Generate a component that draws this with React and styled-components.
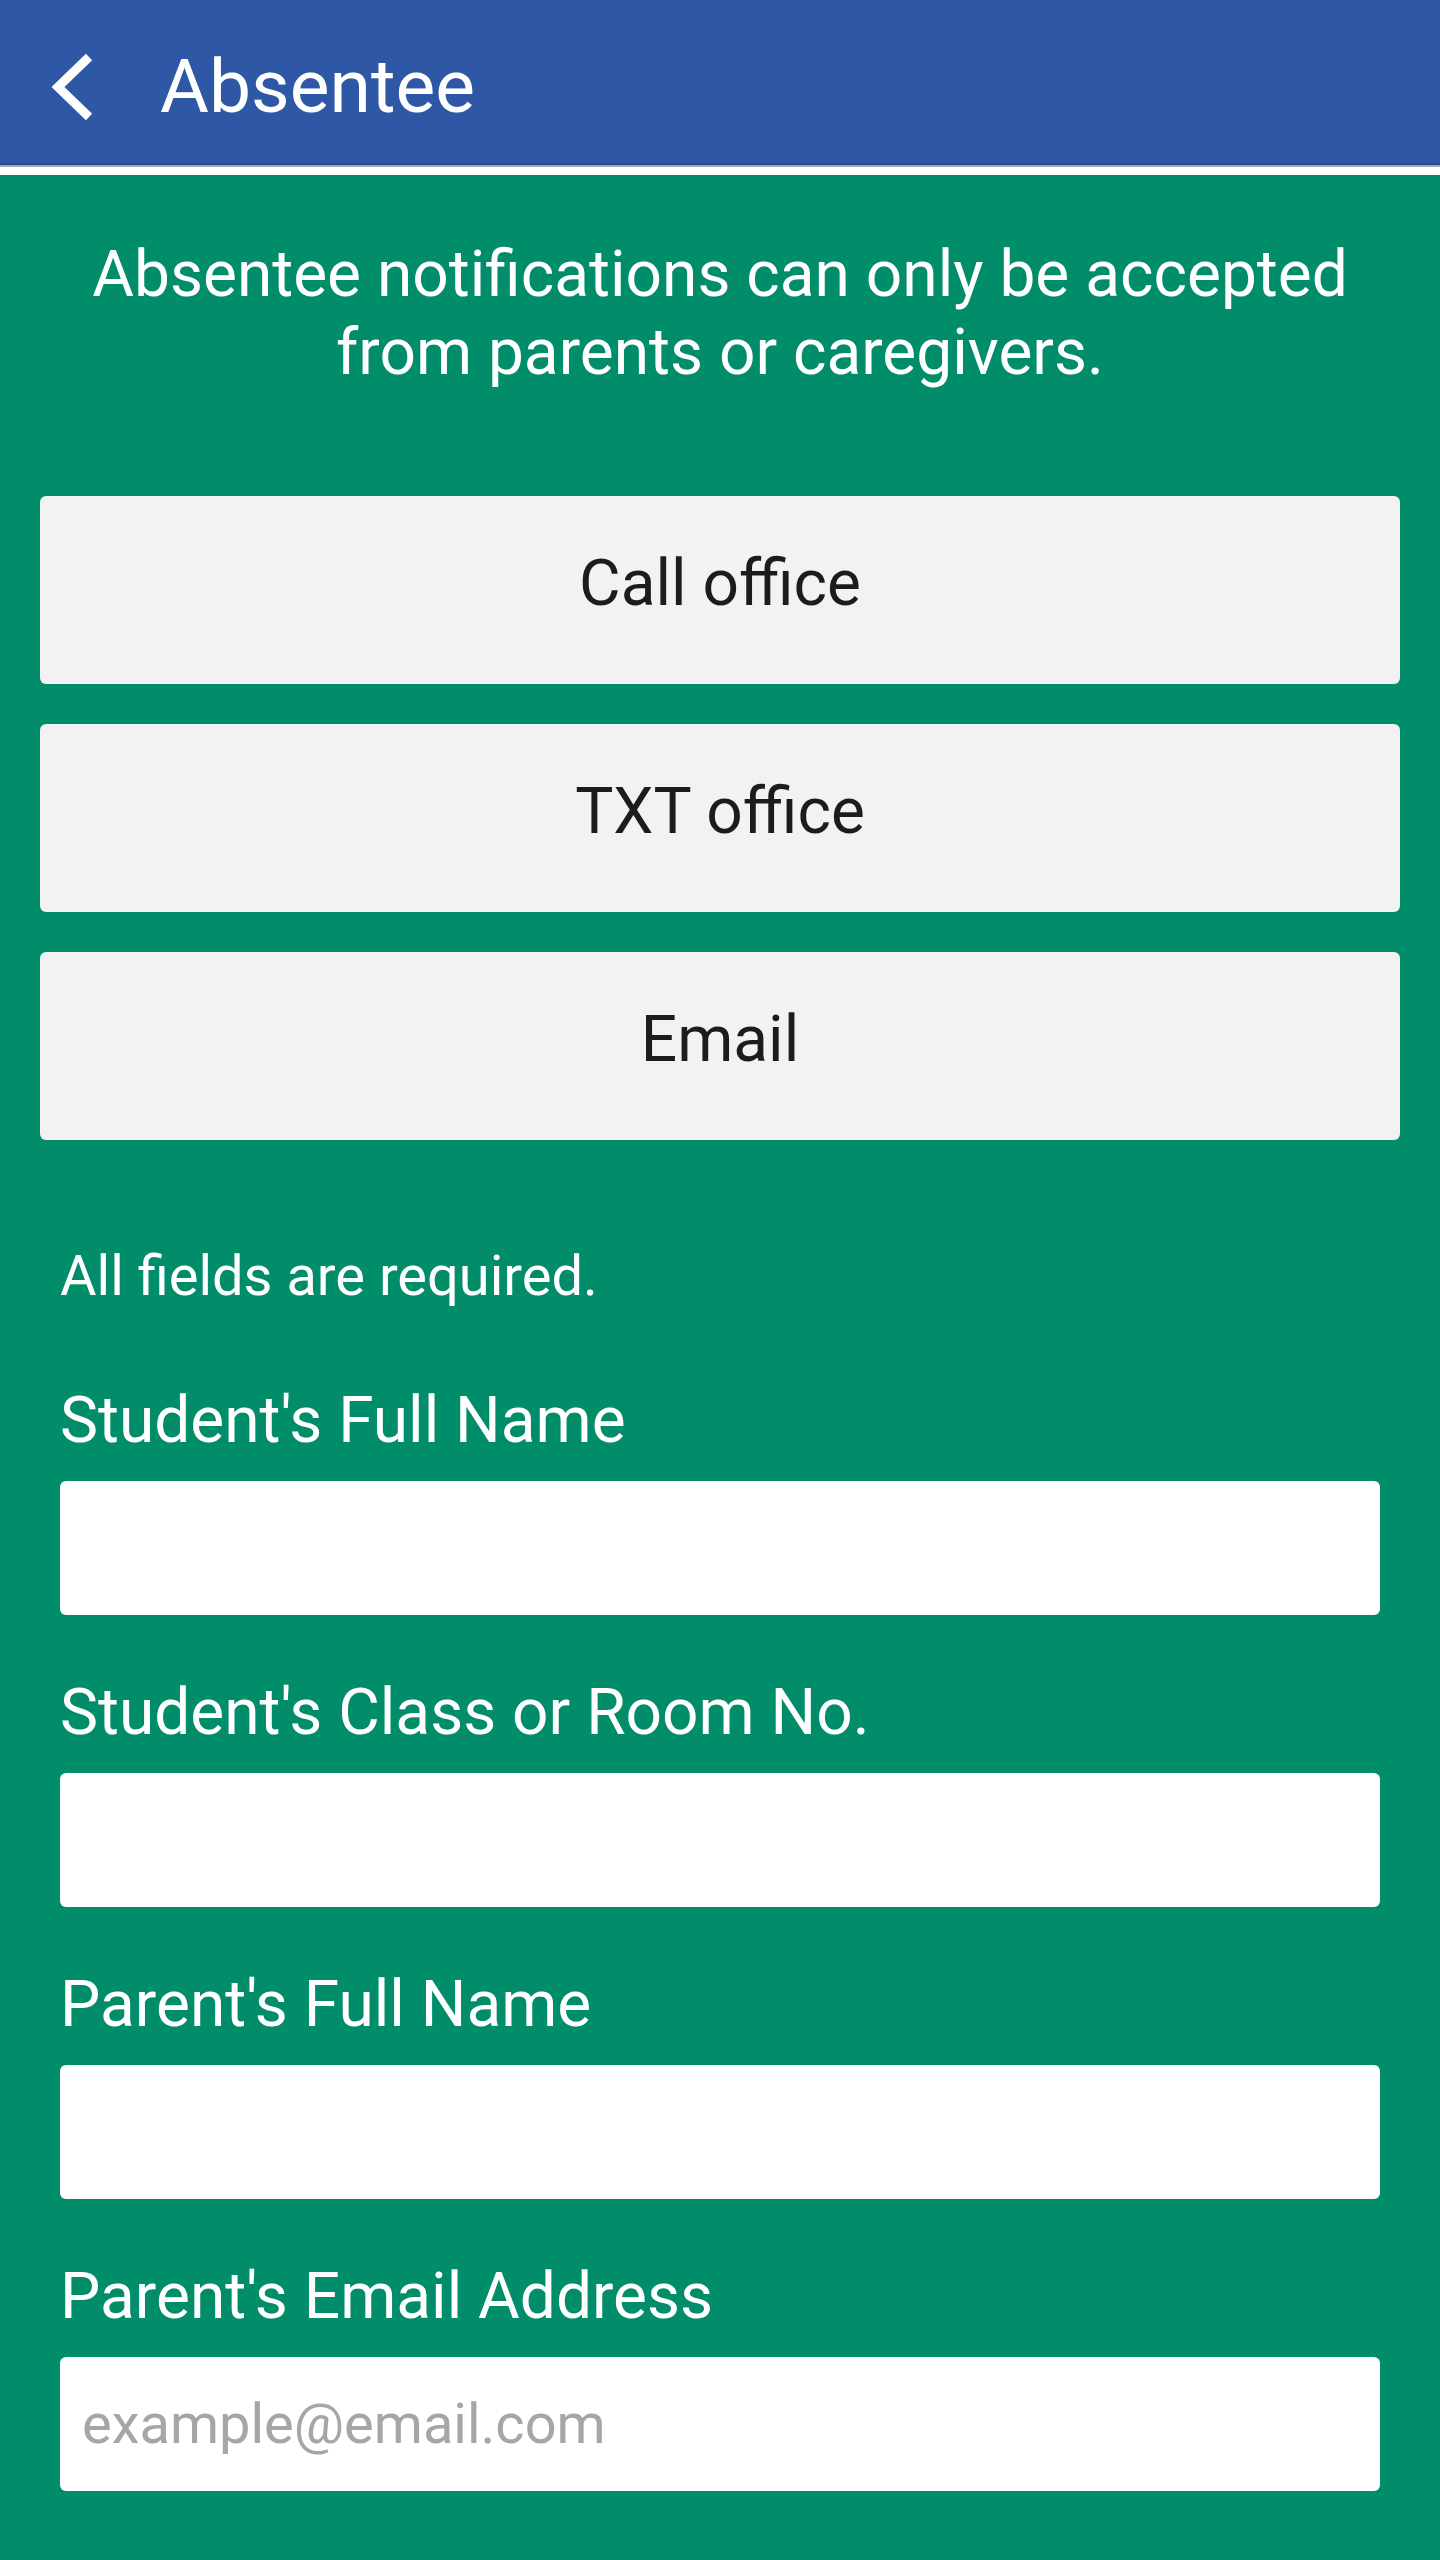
import React from "react";
import styled, { createGlobalStyle } from "styled-components";

const GlobalStyle = createGlobalStyle`
  html, body {
    margin: 0;
    padding: 0;
    background: #018d69;
    font-family: Roboto, "Noto Sans", "Liberation Sans", sans-serif;
  }
  * { box-sizing: border-box; }
`;

const Page = styled.div`
  min-height: 2560px;
  background: #018d69;
  display: flex;
  flex-direction: column;
`;

const Header = styled.header`
  height: 165px;
  background: #2e58a6;
  border-bottom: 2px solid #25498f;
  display: flex;
  align-items: center;
  padding: 10px 0 0 48px;
  gap: 62px;
`;

const HeaderRule = styled.div`
  height: 10px;
  background: #ffffff;
  border-top: 2px solid #a3abb7;
`;

const BackButton = styled.button`
  background: none;
  border: none;
  padding: 0;
  width: 50px;
  height: 80px;
  display: flex;
  align-items: center;
  justify-content: center;
  cursor: pointer;
`;

const Title = styled.h1`
  margin: 0;
  font-size: 75px;
  font-weight: 400;
  color: #ffffff;
  line-height: 1;
`;

const Intro = styled.p`
  margin: 0;
  padding: 61px 60px 0;
  font-size: 64px;
  line-height: 78px;
  color: #ffffff;
  text-align: center;
`;

const ButtonStack = styled.div`
  margin: 104px 40px 0;
  display: flex;
  flex-direction: column;
  gap: 40px;
`;

const ActionButton = styled.button`
  height: 188px;
  border: none;
  border-radius: 6px;
  background: #f2f2f2;
  color: #1c1c1c;
  font-family: inherit;
  font-size: 64px;
  font-weight: 400;
  padding: 0 0 14px;
  display: flex;
  align-items: center;
  justify-content: center;
  cursor: pointer;
`;

const Form = styled.form`
  padding: 0 60px;
  margin-top: 103px;
  display: flex;
  flex-direction: column;
`;

const Note = styled.p`
  margin: 0 0 74px;
  font-size: 56px;
  line-height: 66px;
  color: #ffffff;
`;

const Field = styled.div`
  display: flex;
  flex-direction: column;
  gap: 22px;
  margin-bottom: 60px;
`;

const Label = styled.label`
  font-size: 64px;
  line-height: 76px;
  color: #ffffff;
`;

const Input = styled.input`
  height: 134px;
  border: none;
  border-radius: 6px;
  background: #ffffff;
  padding: 0 22px;
  font-family: inherit;
  font-size: 56px;
  color: #1c1c1c;
  outline: none;
  &::placeholder {
    color: #a6a6a6;
  }
`;

const fields = [
  { id: "student-name", label: "Student's Full Name" },
  { id: "student-class", label: "Student's Class or Room No." },
  { id: "parent-name", label: "Parent's Full Name" },
  { id: "parent-email", label: "Parent's Email Address", placeholder: "example@email.com", type: "email" },
];

export default function App() {
  return (
    <Page>
      <GlobalStyle />
      <Header>
        <BackButton aria-label="Back">
          <svg width="50" height="80" viewBox="0 0 50 80">
            <polyline
              points="41,10 10,40 41,70"
              fill="none"
              stroke="#ffffff"
              strokeWidth="9"
              strokeLinecap="butt"
              strokeLinejoin="miter"
            />
          </svg>
        </BackButton>
        <Title>Absentee</Title>
      </Header>
      <HeaderRule />
      <Intro>
        Absentee notifications can only be accepted from parents or caregivers.
      </Intro>
      <ButtonStack>
        <ActionButton type="button">Call office</ActionButton>
        <ActionButton type="button">TXT office</ActionButton>
        <ActionButton type="button">Email</ActionButton>
      </ButtonStack>
      <Form onSubmit={(e) => e.preventDefault()}>
        <Note>All fields are required.</Note>
        {fields.map((f) => (
          <Field key={f.id}>
            <Label htmlFor={f.id}>{f.label}</Label>
            <Input id={f.id} type={f.type || "text"} placeholder={f.placeholder || ""} />
          </Field>
        ))}
      </Form>
    </Page>
  );
}
